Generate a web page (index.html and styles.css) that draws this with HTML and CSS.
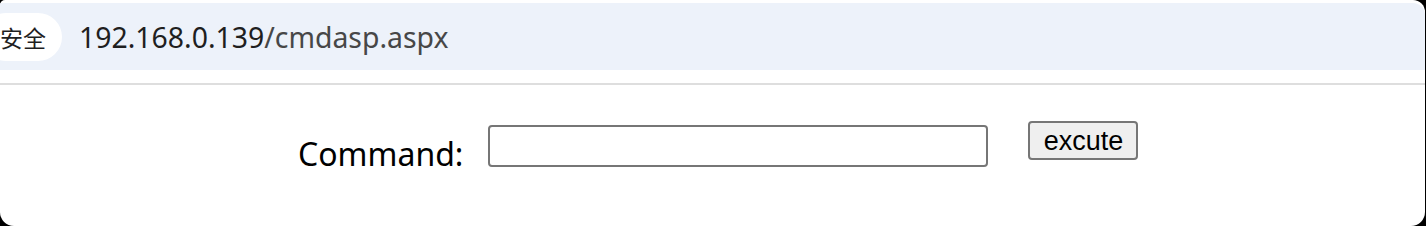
FILE: index.html
```html
<!DOCTYPE html>
<html lang="zh-CN">
<head>
    <meta charset="UTF-8">
    <title>cmdasp.aspx</title>
    <link rel="stylesheet" href="styles.css">
</head>
<body>
    <div class="window">
        <!-- Adressleiste -->
        <div class="toolbar">
            <span class="chip">安全</span>
            <span class="url"><span class="host">192.168.0.139</span>/cmdasp.aspx</span>
        </div>
        <div class="divider"></div>

        <form class="cmd-form" onsubmit="return false;">
            <label class="cmd-label" for="cmd">Command:</label>
            <input class="cmd-input" id="cmd" type="text">
            <button class="cmd-button" type="submit">excute</button>
        </form>
    </div>
</body>
</html>
```

FILE: styles.css
```css
/* Basis */
html, body {
    margin: 0;
    background: #000;
}

.window {
    width: 1425px;
    height: 226px;
    background: #fff;
    border-radius: 5px 12px 14px 14px;
    overflow: hidden;
}

/* Adressleiste */
.toolbar {
    margin-top: 3px;
    height: 67px;
    background: #edf2fa;
    border-top-right-radius: 12px;
    display: flex;
    align-items: center;
}

.chip {
    margin-left: -18px;
    padding: 0 16px 0 18px;
    height: 48px;
    line-height: 48px;
    background: #fff;
    border-radius: 24px;
    font-family: "Noto Sans CJK SC", sans-serif;
    font-size: 23px;
    color: #1f1f1f;
}

.url {
    margin-left: 17px;
    font-family: "Noto Sans", sans-serif;
    font-size: 28.4px;
    color: #474747;
}

.url .host {
    color: #1f1f1f;
}

.divider {
    margin-top: 13px;
    height: 2px;
    background: #dedede;
}

/* Formular */
.cmd-form {
    display: flex;
    align-items: flex-start;
    padding-left: 298px;
}

.cmd-label {
    margin-top: 48px;
    line-height: 42px;
    font-family: "Noto Sans", sans-serif;
    font-size: 32px;
    color: #000;
}

.cmd-input {
    margin: 40px 0 0 25px;
    box-sizing: border-box;
    width: 500px;
    height: 42px;
    border: 2px solid #767676;
    border-radius: 4px;
    padding: 0 6px;
    background: #fff;
}

.cmd-button {
    margin: 36px 0 0 40px;
    box-sizing: border-box;
    width: 110px;
    height: 39px;
    border: 2px solid #767676;
    border-radius: 4px;
    background: #efefef;
    padding: 2px 0 0;
    font-family: "Liberation Sans", Arial, sans-serif;
    font-size: 27px;
    color: #000;
}
```
